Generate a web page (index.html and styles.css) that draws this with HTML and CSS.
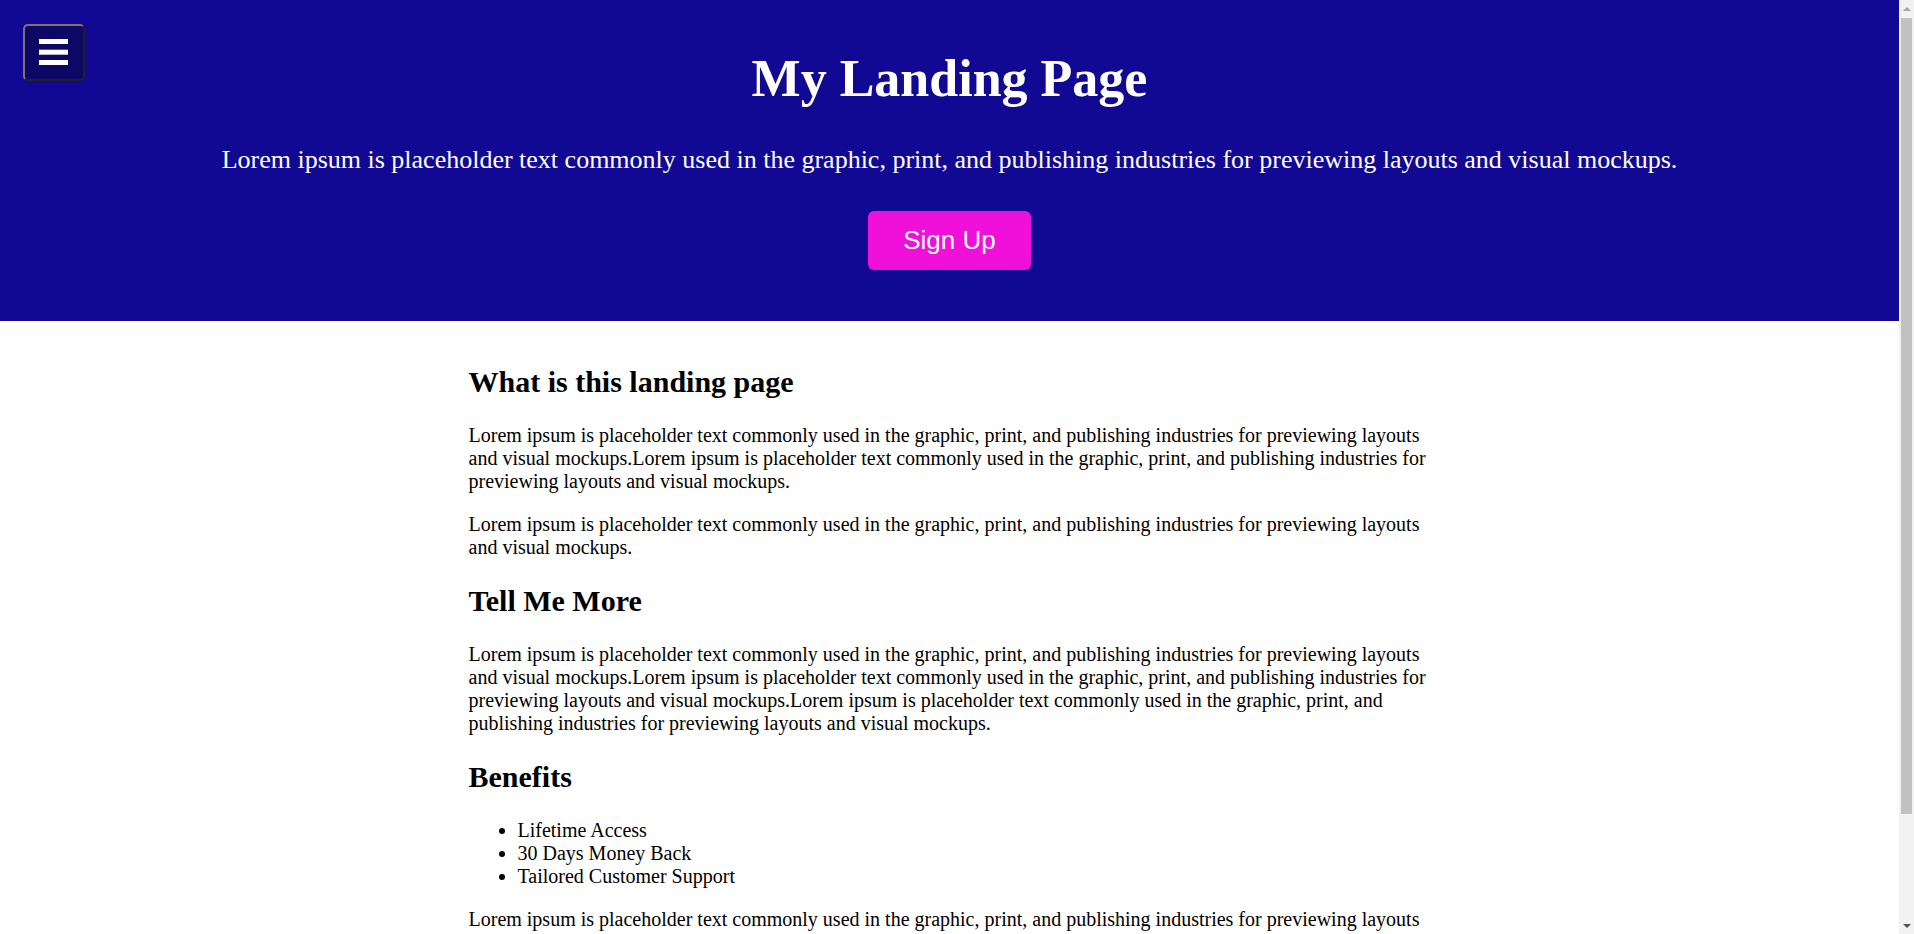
FILE: index.html
```html
<!DOCTYPE html>
<html lang="en">
<head>
<meta charset="utf-8">
<title>My Landing Page</title>
<link rel="stylesheet" href="styles.css">
</head>
<body>
<button class="menu-btn" type="button" aria-label="Menu">
  <svg width="30" height="27" viewBox="0 0 30 27" aria-hidden="true">
    <rect x="0" y="0" width="29" height="5" fill="#fff"/>
    <rect x="0" y="10.7" width="29" height="5" fill="#fff"/>
    <rect x="0" y="21" width="29" height="5" fill="#fff"/>
  </svg>
</button>
<header class="hero">
  <h1 class="hero-title">My Landing Page</h1>
  <p class="hero-text">Lorem ipsum is placeholder text commonly used in the graphic, print, and publishing industries for previewing layouts and visual mockups.</p>
  <a class="cta" href="#">Sign Up</a>
</header>
<main class="content">
  <h2>What is this landing page</h2>
  <p>Lorem ipsum is placeholder text commonly used in the graphic, print, and publishing industries for previewing layouts and visual mockups.Lorem ipsum is placeholder text commonly used in the graphic, print, and publishing industries for previewing layouts and visual mockups.</p>
  <p>Lorem ipsum is placeholder text commonly used in the graphic, print, and publishing industries for previewing layouts and visual mockups.</p>
  <h2>Tell Me More</h2>
  <p>Lorem ipsum is placeholder text commonly used in the graphic, print, and publishing industries for previewing layouts and visual mockups.Lorem ipsum is placeholder text commonly used in the graphic, print, and publishing industries for previewing layouts and visual mockups.Lorem ipsum is placeholder text commonly used in the graphic, print, and publishing industries for previewing layouts and visual mockups.</p>
  <h2>Benefits</h2>
  <ul>
    <li>Lifetime Access</li>
    <li>30 Days Money Back</li>
    <li>Tailored Customer Support</li>
  </ul>
  <p>Lorem ipsum is placeholder text commonly used in the graphic, print, and publishing industries for previewing layouts and visual mockups.Lorem ipsum is placeholder text commonly used in the graphic, print, and publishing industries for previewing layouts and visual mockups.</p>
</main>
<div class="scrollbar" aria-hidden="true">
  <div class="sb-btn">
    <svg width="8" height="4" viewBox="0 0 8 4"><polygon points="0,4 4,0 8,4" fill="#a3a3a3"/></svg>
  </div>
  <div class="sb-track">
    <div class="sb-thumb"></div>
  </div>
  <div class="sb-btn">
    <svg width="8" height="4" viewBox="0 0 8 4"><polygon points="0,0 8,0 4,4" fill="#505050"/></svg>
  </div>
</div>
</body>
</html>
```
FILE: styles.css
```css
html, body {
  margin: 0;
  padding: 0;
}
body {
  font-family: "Liberation Serif", "Times New Roman", serif;
  font-size: 20px;
  color: #000;
  background: #fff;
  padding-right: 15px;
}
.scrollbar {
  position: fixed;
  top: 0;
  right: 0;
  width: 15px;
  height: 100vh;
  background: #f1f1f1;
  display: flex;
  flex-direction: column;
}
.sb-btn {
  height: 17px;
  flex: none;
  display: flex;
  align-items: center;
  justify-content: center;
}
.sb-btn svg {
  display: block;
}
.sb-track {
  flex: 1;
  padding: 1px 2px 0;
}
.sb-thumb {
  height: 796px;
  background: #c1c1c1;
}
.menu-btn {
  position: absolute;
  top: 24px;
  left: 23px;
  width: 62px;
  height: 57px;
  box-sizing: border-box;
  padding: 0;
  border: 2px outset rgb(118, 118, 118);
  border-radius: 5px;
  background: rgb(13, 7, 101);
  display: flex;
  align-items: center;
  justify-content: center;
  cursor: pointer;
}
.menu-btn svg {
  display: block;
  margin-top: -1px;
}
.hero {
  background: rgb(17, 9, 148);
  color: #fff;
  text-align: center;
  padding: 49px 20px 51px;
  display: flex;
  flex-direction: column;
  align-items: center;
}
.hero-title {
  margin: 0 0 37px;
  font-size: 52px;
  font-weight: bold;
}
.hero-text {
  margin: 0 0 36px;
  font-size: 26px;
}
.cta {
  display: inline-block;
  font-family: "Liberation Sans", Arial, sans-serif;
  font-size: 26px;
  color: #fff;
  text-decoration: none;
  background: rgb(240, 16, 218);
  padding: 14px 35px;
  border-radius: 6px;
}
.content {
  max-width: 962px;
  margin: 0 auto;
  padding: 19px 0 70px;
}
.content h2 {
  font-size: 30px;
  margin: 25px 0;
}
.content p {
  margin: 20px 0;
}
.content ul {
  margin: 20px 0;
  padding-left: 49px;
}
```
